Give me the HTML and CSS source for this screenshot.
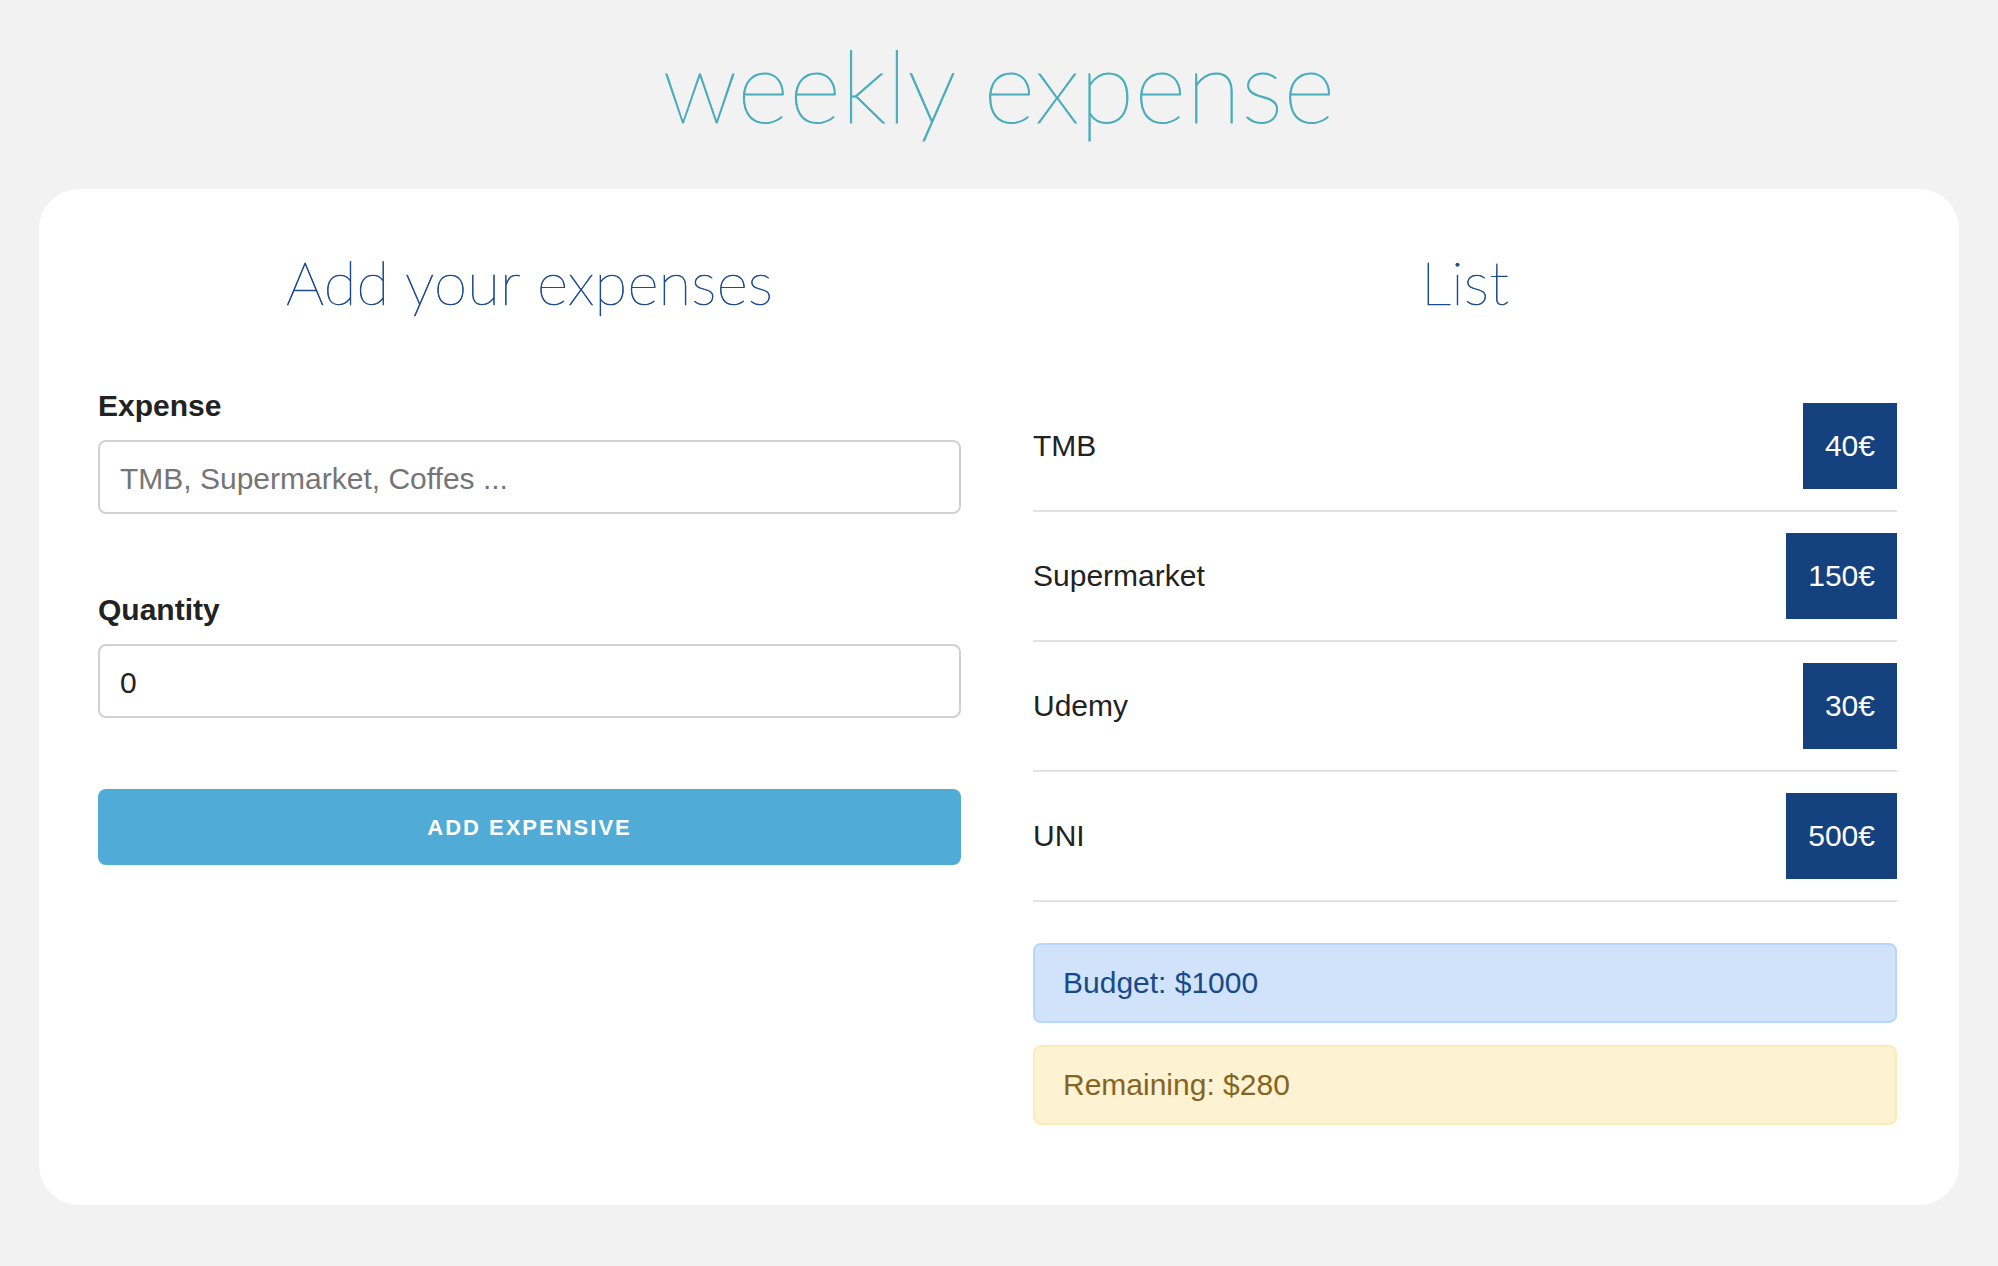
FILE: index.html
```html
<!DOCTYPE html>
<html lang="en">
<head>
<meta charset="utf-8">
<title>Weekly expense</title>
<link rel="stylesheet" href="styles.css">
</head>
<body>
<header class="header">
  <h1 class="title">weekly expense</h1>
</header>
<main class="card">
  <section class="col">
    <h2 class="heading">Add your expenses</h2>
    <form class="form">
      <label class="label" for="expense">Expense</label>
      <input class="input" id="expense" type="text" placeholder="TMB, Supermarket, Coffes ...">
      <label class="label" for="qty">Quantity</label>
      <input class="input" id="qty" type="text" value="0">
      <button class="btn" type="button">Add expensive</button>
    </form>
  </section>
  <section class="col">
    <h2 class="heading">List</h2>
    <ul class="list">
      <li class="item"><span class="item-name">TMB</span><span class="badge">40€</span></li>
      <li class="item"><span class="item-name">Supermarket</span><span class="badge">150€</span></li>
      <li class="item"><span class="item-name">Udemy</span><span class="badge">30€</span></li>
      <li class="item"><span class="item-name">UNI</span><span class="badge">500€</span></li>
    </ul>
    <div class="alert alert-budget">Budget: $1000</div>
    <div class="alert alert-remaining">Remaining: $280</div>
  </section>
</main>
</body>
</html>
```
FILE: styles.css
```css
* {
  box-sizing: border-box;
}

body {
  margin: 0;
  background: #f2f2f2;
  font-family: "Liberation Sans", Arial, sans-serif;
  font-size: 30px;
  color: #222;
}

.header {
  padding-top: 24px;
  margin-bottom: 45px;
  text-align: center;
}

.title {
  margin: 0;
  font-family: Lato, Roboto, sans-serif;
  font-weight: 100;
  font-size: 100px;
  line-height: 120px;
  letter-spacing: 0.4px;
  color: #49adbb;
  -webkit-text-stroke: 1px #49adbb;
}

.card {
  width: 1920px;
  margin: 0 auto;
  background: #fff;
  border-radius: 40px;
  padding: 57px 62px 60px 59px;
  display: grid;
  grid-template-columns: 863px 864px;
  column-gap: 72px;
  align-items: start;
}

.heading {
  margin: 0 0 64px;
  font-family: Lato, Roboto, sans-serif;
  font-weight: 100;
  font-size: 60px;
  line-height: 72px;
  letter-spacing: 0.2px;
  text-align: center;
  color: #1c4b8e;
  -webkit-text-stroke: 0.7px #1c4b8e;
}

.form {
  display: flex;
  flex-direction: column;
}

.label {
  display: block;
  font-weight: bold;
  line-height: 48px;
  margin: 0 0 10px;
  color: #222;
}

.input {
  width: 100%;
  height: 74px;
  border: 2px solid #d1d1d1;
  border-radius: 8px;
  padding: 3px 20px 0;
  font-family: "Liberation Sans", Arial, sans-serif;
  font-size: 30px;
  color: #222;
  background: #fff;
  margin: 0 0 72px;
  outline: none;
}

.input::placeholder {
  color: #757575;
}

.btn {
  height: 76px;
  width: 100%;
  border: none;
  border-radius: 8px;
  background: #50abd6;
  color: #fff;
  font-family: "Liberation Sans", Arial, sans-serif;
  font-weight: bold;
  font-size: 22px;
  letter-spacing: 2px;
  text-transform: uppercase;
  margin-top: -1px;
  padding-top: 3px;
}

.list {
  list-style: none;
  margin: 0 0 41px;
  padding: 0;
}

.item {
  display: flex;
  justify-content: space-between;
  align-items: center;
  padding: 21px 0;
  border-bottom: 2px solid #e1e1e1;
}

.item-name {
  color: #222;
}

.badge {
  height: 86px;
  display: flex;
  align-items: center;
  padding: 0 22px;
  background: #15427e;
  color: #fff;
}

.alert {
  height: 80px;
  line-height: 76px;
  padding: 0 28px;
  border: 2px solid;
  border-radius: 8px;
  margin-bottom: 22px;
}

.alert-budget {
  background: #d0e3fa;
  border-color: #b8d6fb;
  color: #184a8b;
}

.alert-remaining {
  background: #fdf2d2;
  border-color: #fcebb8;
  color: #856421;
  margin-bottom: 20px;
}
```
